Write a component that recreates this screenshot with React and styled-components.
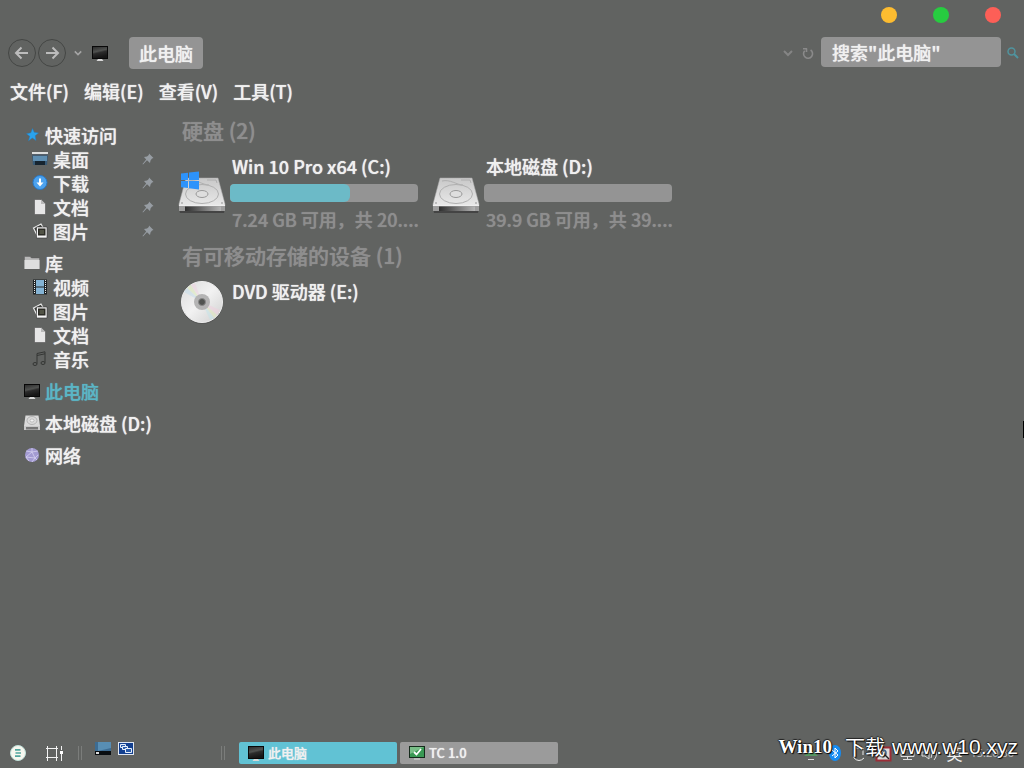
import React from "react";
import styled, { createGlobalStyle } from "styled-components";

const cjk = '"Noto Sans CJK SC", "Noto Sans", sans-serif';

const GlobalStyle = createGlobalStyle`
  * { box-sizing: border-box; }
  body {
    margin: 0;
    background: #616361;
    color: #f0f0f0;
    font: 500 18px/24px ${cjk};
    text-shadow: 0 0 1px currentColor;
  }
  button, input { font: inherit; color: inherit; text-shadow: inherit; }
  button { border: 0; padding: 0; background: none; cursor: pointer; }
  h2, p, ul { margin: 0; padding: 0; }
  svg { display: block; flex: none; }
`;

const Window = styled.div`
  position: relative;
  display: flex;
  flex-direction: column;
  min-height: 100vh;
  overflow: hidden;
`;

const TitleBar = styled.header`
  display: flex;
  justify-content: flex-end;
  gap: 36px;
  padding: 7px 23px 0 0;
  height: 37px;
`;

const WindowButton = styled.button`
  width: 16px;
  height: 16px;
  border-radius: 50%;
  background: ${(p) => p.$color};
`;

const NavBar = styled.nav`
  display: flex;
  align-items: center;
  height: 32px;
  padding: 0 1px 0 8px;
`;

const RoundButton = styled.button`
  display: grid;
  place-items: center;
  width: 28px;
  height: 28px;
  margin-right: 2px;
  border: 1px solid #444644;
  border-radius: 50%;
`;

const NavIcon = styled.div`
  margin: 0 21px 0 4px;
`;

const PlainButton = styled.button`
  display: grid;
  place-items: center;
  width: 20px;
  height: 20px;
`;

const Address = styled.button`
  height: 32px;
  padding: 0 10px;
  border-radius: 4px;
  background: #949494;
`;

const Spacer = styled.div`
  flex: 1;
`;

const SearchInput = styled.input`
  width: 180px;
  height: 30px;
  margin: 0 2px 2px 3px;
  padding: 0 11px;
  border: 0;
  border-radius: 4px;
  background: #949494;
  &::placeholder { color: #f0f0f0; opacity: 1; }
`;

const MenuBar = styled.nav`
  display: flex;
  gap: 15px;
  height: 46px;
  padding: 10px 10px 0;
`;

const MenuButton = styled.button`
  height: 24px;
`;

const Body = styled.div`
  display: flex;
  flex: 1;
`;

const Sidebar = styled.aside`
  width: 178px;
  flex: none;
  display: flex;
  flex-direction: column;
  gap: 8px;
  padding-top: 8px;
`;

const TreeGroup = styled.ul`
  list-style: none;
`;

const TreeLink = styled.a`
  display: flex;
  align-items: center;
  height: 24px;
  padding: 0 24px 0 ${(p) => (p.$nested ? 32 : 24)}px;
  gap: 5px;
  color: ${(p) => (p.$active ? "#5bb5c5" : "inherit")};
  text-shadow: 0 0 1px currentColor;
  text-decoration: none;
  white-space: nowrap;
`;

const Pin = styled.span`
  margin-left: auto;
`;

const Content = styled.main`
  flex: 1;
  min-width: 0;
`;

const GroupTitle = styled.h2`
  padding-left: 4px;
  font-size: 21px;
  font-weight: 500;
  line-height: 30px;
  color: #8e8e8e;
  text-shadow: 0 0 1px currentColor;
`;

const DriveGrid = styled.div`
  display: flex;
  flex-wrap: wrap;
  column-gap: 14px;
  padding: 9px 0;
`;

const Drive = styled.article`
  display: flex;
  align-items: ${(p) => (p.$top ? "flex-start" : "center")};
  gap: 4px;
  width: 240px;
`;

const DriveInfo = styled.div`
  width: 188px;
`;

const DriveName = styled.p`
  padding-left: 2px;
  white-space: nowrap;
`;

const Meter = styled.div`
  height: 18px;
  margin: 6px 0 5px;
  border-radius: 4px;
  background: #949494;
  overflow: hidden;
`;

const MeterFill = styled.div`
  height: 100%;
  border-radius: 4px 6px 6px 4px;
  background: #6cbac7;
`;

const DriveSpace = styled.p`
  padding-left: 2px;
  color: #8e8e8e;
  text-shadow: 0 0 1px currentColor;
  white-space: nowrap;
`;

const Taskbar = styled.footer`
  display: flex;
  align-items: center;
  height: 30px;
  padding: 0 10px;
`;

const StartArea = styled.div`
  display: flex;
  align-items: center;
  gap: 20px;
  width: 68px;
`;

const QuickLaunch = styled.div`
  display: flex;
  align-items: flex-start;
  gap: 7px;
  width: 139px;
  height: 22px;
  padding-left: 13px;
`;

const Divider = styled.span`
  flex: none;
  width: 4px;
  height: 14px;
  border: solid #7b7d7b;
  border-width: 0 1px;
`;

const Task = styled.button`
  display: flex;
  align-items: center;
  gap: 4px;
  width: 158px;
  height: 22px;
  margin-right: 3px;
  padding: 0 9px;
  border-radius: 2px;
  background: ${(p) => (p.$active ? "#61c2d4" : "#9b9b9b")};
  font: 500 13px/22px ${cjk};
`;

const TaskGroup = styled.div`
  display: flex;
  margin-left: 14px;
`;

const Tray = styled.div`
  display: flex;
  align-items: center;
  gap: 8px;
  margin-left: auto;
  font: 16px/20px ${cjk};
  text-shadow: none;
`;

const Clock = styled.time`
  font: 11px/16px "Open Sans", sans-serif;
  color: #c4c4c4;
`;

const Watermark = styled.div`
  position: absolute;
  right: 6px;
  bottom: 8px;
  display: flex;
  align-items: center;
  height: 26px;
  color: #fff;
  font: 21px/26px "Liberation Sans", sans-serif;
  text-shadow: 1px 1px 1px #000, -1px 0 1px #222, 0 -1px 1px #222;
  white-space: nowrap;
`;

const WatermarkSerif = styled.span`
  margin-right: 13px;
  font: bold 19px/26px "Liberation Serif", serif;
`;

const WatermarkCjk = styled.span`
  margin-right: 7px;
  font: 20px/26px ${cjk};
`;

const EdgePointer = styled.span`
  position: absolute;
  right: 0;
  top: 421px;
  width: 1px;
  height: 17px;
  background: #000;
`;

const ArrowIcon = ({ flip }) => (
  <svg width="16" height="16" viewBox="0 0 16 16" fill="none" stroke="#bcbcbc" strokeWidth="2">
    <path d={flip ? "M2 8H14M8.500 2.500L14 8L8.500 13.500" : "M14 8H2M7.500 2.500L2 8L7.500 13.500"} />
  </svg>
);

const Chevron = ({ size, color }) => (
  <svg width={size} height={size} viewBox="0 0 10 10" fill="none" stroke={color} strokeWidth="2">
    <path d="M1 3L5 7L9 3" />
  </svg>
);

const RefreshIcon = () => (
  <svg width="12" height="14" viewBox="0 0 12 14" fill="none" stroke="#8a8a8a" strokeWidth="1.600">
    <path d="M2.700 4.700A4.500 4.500 0 1 0 8.600 4M4.500 2.500V6M1 2.800H5" />
  </svg>
);

const SearchIcon = () => (
  <svg width="12" height="12" viewBox="0 0 12 12" fill="none" stroke="#50949f">
    <circle cx="4.500" cy="4.500" r="3.500" strokeWidth="1.500" />
    <path d="M7 7L11 11" strokeWidth="2" />
  </svg>
);

const MonitorIcon = () => (
  <svg width="16" height="17" viewBox="0 0 16 17">
    <defs>
      <linearGradient id="screen" x1="0" y1="0" x2="0.300" y2="1">
        <stop offset="0" stopColor="#2c2c2c" />
        <stop offset=".45" stopColor="#505250" />
        <stop offset=".6" stopColor="#2c2c2c" />
        <stop offset="1" stopColor="#161616" />
      </linearGradient>
    </defs>
    <path d="M0 1H16V14H0Z" fill="#080808" />
    <path d="M1 2H15V13H1Z" fill="url(#screen)" />
    <path d="M6 14H10L11.500 16H4.500Z" fill="#d9d9d9" />
  </svg>
);

const StarIcon = () => (
  <svg width="16" height="16" viewBox="0 0 16 16">
    <path d="M8.500 1.500L10.200 5.200L14.500 6L11.200 8.800L12 13.500L8.400 11L4.500 13.800L5.800 9.300L2.500 6.800L6.800 5.800Z" fill="#29a3ed" stroke="#287bb8" strokeWidth=".5" />
  </svg>
);

const DesktopIcon = () => (
  <svg width="16" height="16" viewBox="0 0 16 16">
    <path d="M0 4H16L15 14H1Z" fill="#385a76" />
    <path d="M1 5H15V10H1Z" fill="#5f8fb2" />
    <path d="M0 1H16V3H0Z" fill="#dcdede" />
    <path d="M0 3H16V4.500H0Z" fill="#55606a" />
    <path d="M3 10H13V14H3Z" fill="#16242f" />
  </svg>
);

const DownloadIcon = () => (
  <svg width="16" height="16" viewBox="0 0 16 16">
    <circle cx="8" cy="7.500" r="7" fill="#4ca2ee" stroke="#2779ca" />
    <path d="M7 3.500H9V7.500H11.500L8 11.500L4.500 7.500H7Z" fill="#fff" />
  </svg>
);

const DocumentIcon = () => (
  <svg width="16" height="16" viewBox="0 0 16 16">
    <path d="M2.500 0.500H9L13.500 5V15.500H2.500Z" fill="#e6e6e6" stroke="#444" strokeWidth=".5" />
    <path d="M9 0.500V5H13.500Z" fill="#b9b9b9" />
  </svg>
);

const PicturesIcon = () => (
  <svg width="16" height="16" viewBox="0 0 16 16">
    <path d="M5 12L1.500 5L9 1L11 4.500" fill="#3c3e3a" stroke="#e8e8e8" strokeWidth="1.200" />
    <path d="M4.500 4H15V15H4.500Z" fill="#f5f5f5" stroke="#333" strokeWidth=".6" />
    <path d="M6 5.500H13.500V12.500H6Z" fill="#2c2c26" />
    <path d="M7.500 7H12V11H7.500Z" fill="#515345" />
  </svg>
);

const FolderIcon = () => (
  <svg width="16" height="16" viewBox="0 0 16 16">
    <path d="M0.500 1.500H6L7.500 3H15.500V14H0.500Z" fill="#b9b9b9" stroke="#555" strokeWidth=".4" />
    <path d="M0.500 5H15.500V14H0.500Z" fill="#dedede" />
  </svg>
);

const FilmIcon = () => (
  <svg width="16" height="16" viewBox="0 0 16 16">
    <path d="M1 0.500H15V15.500H1Z" fill="#202426" />
    <path d="M4 1H12V7.500H4ZM4 8.500H12V15H4Z" fill="#84b3d4" />
    <path d="M2.500 1V15M13.500 1V15" stroke="#e8e8e8" strokeDasharray="1 1" />
  </svg>
);

const MusicIcon = () => (
  <svg width="16" height="16" viewBox="0 0 16 16" fill="none" stroke="#343634">
    <path d="M5 12.500V2.500L13 0.800V11.500M5 4.500L13 2.800" />
    <ellipse cx="3" cy="13" rx="2" ry="1.500" />
    <ellipse cx="11" cy="12" rx="2" ry="1.500" />
  </svg>
);

const NetworkIcon = () => (
  <svg width="16" height="16" viewBox="0 0 16 16">
    <circle cx="8" cy="8" r="7" fill="#a39bd2" />
    <path d="M2 4L8 5L14 4M2 10L8 5L11 11L14 8M2 10L11 11L8 15M2 10L5 14M8 1L8 5M11 11L13 13" fill="none" stroke="#d5d0f0" strokeWidth=".8" />
  </svg>
);

const SmallDriveIcon = () => (
  <svg width="16" height="16" viewBox="0 0 16 16">
    <path d="M1.500 0.500H14.500L16 11H0Z" fill="#dadada" />
    <ellipse cx="8" cy="5.500" rx="5" ry="4" fill="none" stroke="#aaa" strokeWidth=".8" />
    <ellipse cx="8" cy="5.500" rx="2" ry="1.500" fill="#f2f2f2" stroke="#999" strokeWidth=".5" />
    <path d="M0 11H16V15H0Z" fill="#c9c9c9" />
    <path d="M2 12H14V14.500H2Z" fill="#777" />
  </svg>
);

const PinIcon = () => (
  <svg width="12" height="12" viewBox="0 0 12 12">
    <path d="M7 0.500L11.500 5L10 5.500L8.500 7.500L8 10L5 7.300L1 11.500L0.500 11L4.200 6.500L2 4L5 3.500L6.800 2Z" fill="#979da3" />
  </svg>
);

const DriveIcon = ({ system }) => (
  <svg width="48" height="48" viewBox="0 0 48 48">
    <defs>
      <linearGradient id="lid" x1="0" y1="0" x2="0" y2="1">
        <stop offset="0" stopColor="#c8c8c8" />
        <stop offset="1" stopColor="#e9e9e9" />
      </linearGradient>
      <linearGradient id="edge">
        <stop offset="0" stopColor="#2e2e2e" />
        <stop offset="1" stopColor="#b4b4b4" />
      </linearGradient>
    </defs>
    <path d="M1 38L2 44H46L47 38Z" fill="#444" />
    <path d="M8 9H40L47 35V37H1V35Z" fill="url(#lid)" stroke="#aaa" strokeWidth=".5" />
    <path d="M1 36H47V42H1Z" fill="#9d9d9d" />
    <path d="M1 36.500H47" stroke="#eee" />
    <path d="M7 37.500H43V42H7Z" fill="url(#edge)" />
    <ellipse cx="24" cy="25" rx="16.500" ry="9.500" fill="none" stroke="#b0b0b0" />
    <path d="M10 12C18 10 25 16 31 16M29 11H38L39 14" fill="none" stroke="#b0b0b0" />
    <ellipse cx="24" cy="25" rx="6" ry="3.500" fill="#dedede" stroke="#999" />
    <circle cx="4" cy="34" r=".8" fill="#888" />
    <circle cx="44" cy="34" r=".8" fill="#888" />
    {system && (
      <path d="M3 4.500L10 3.800V11H3ZM11 3.600L21 2.500V11H11ZM3 12H10V19L3 18.200ZM11 12H21V20.500L11 19.200Z" fill="#2d93fb" />
    )}
  </svg>
);

const DiscIcon = () => (
  <svg width="48" height="48" viewBox="0 0 48 48">
    <defs>
      <linearGradient id="disc" x1="0" y1="0" x2="1" y2="1">
        <stop offset="0" stopColor="#dadada" />
        <stop offset=".48" stopColor="#f2f2f2" />
        <stop offset="1" stopColor="#cecece" />
      </linearGradient>
    </defs>
    <circle cx="24" cy="24" r="21" fill="#4b4b4b" opacity=".5" />
    <circle cx="24" cy="23" r="20.500" fill="url(#disc)" stroke="#eee" />
    <g opacity=".55">
      <path d="M24 23L9 9L13 6Z" fill="#ddecbb" />
      <path d="M24 23L6 13L9 9Z" fill="#c5ddea" />
      <path d="M24 23L13 6L17 4Z" fill="#efd4e1" />
      <path d="M24 23L42 31L39 36Z" fill="#efd1de" />
      <path d="M24 23L39 36L36 39Z" fill="#dfe8bd" />
      <path d="M24 23L36 39L32 41Z" fill="#c5e4e8" />
    </g>
    <circle cx="24" cy="23" r="8" fill="#b4b4b4" />
    <circle cx="24" cy="23" r="3.500" fill="#505350" stroke="#888" />
  </svg>
);

const StartIcon = () => (
  <svg width="16" height="16" viewBox="0 0 16 16">
    <circle cx="8" cy="8" r="7.500" fill="#f7f7ef" stroke="#bfe0d9" />
    <path d="M5 4.800H10.500M5.500 8H11M5 11.200H10.500" stroke="#52a69f" strokeWidth="1.700" />
  </svg>
);

const TaskViewIcon = () => (
  <svg width="17" height="16" viewBox="0 0 17 16" fill="none" stroke="#f3f3f3">
    <path d="M0 3.500H12M0 12.500H12M1.500 1V3.500M10.500 1V3.500M1.500 3.500V12.500M10.500 3.500V12.500M1.500 12.500V16M10.500 12.500V16M15.500 1V5M15.500 9V16" />
    <path d="M14 6H17V9H14Z" fill="#fff" stroke="none" />
  </svg>
);

const ShowDesktopIcon = () => (
  <svg width="16" height="14" viewBox="0 0 16 14">
    <path d="M0 0H16V10H0Z" fill="#3d6c92" />
    <path d="M3 0H16V6L3 9Z" fill="#6aa5cc" opacity=".6" />
    <path d="M0 9H16V13H0Z" fill="#090d10" />
    <path d="M1 10H4V12H1Z" fill="#ddd" />
  </svg>
);

const WindowsIcon = () => (
  <svg width="16" height="14" viewBox="0 0 16 14">
    <path d="M0 0H16V13H0Z" fill="#dfe6f2" />
    <path d="M1 1H15V12H1Z" fill="#123f8f" />
    <g fill="#2b5cab" stroke="#e8f0fb">
      <path d="M2.500 2.500H7.500V5.500H2.500Z" />
      <path d="M4.500 4.500H9.500V7.500H4.500Z" />
      <path d="M7.500 6.500H13.500V10.500H7.500Z" />
    </g>
  </svg>
);

const CheckMonitorIcon = () => (
  <svg width="16" height="16" viewBox="0 0 16 16">
    <path d="M0 1H16V13H0Z" fill="#152b1c" />
    <path d="M1 2H15V12H1Z" fill="#399954" />
    <path d="M1 2H15L1 9Z" fill="#79bf88" />
    <path d="M5 7L7.500 9.500L12 4" fill="none" stroke="#fff" strokeWidth="1.800" />
    <path d="M5 14H11" stroke="#ddd" />
  </svg>
);

const TrayIcons = () => (
  <svg width="140" height="18" viewBox="0 0 140 18" fill="none">
    <path d="M6 12L13 5L20 12Z" fill="#579863" />
    <path d="M10 15.500H16" stroke="#ddd" />
    <ellipse cx="37" cy="9" rx="6" ry="8" fill="#168cf2" />
    <path d="M34 6L40 11L37 14V4L40 7L34 12" stroke="#fff" />
    <path d="M56 6V14Q61 19 66 14M58 4H65V11" stroke="#eee" />
    <path d="M78.500 3.500H92.500V16.500H78.500Z" fill="#ddd" stroke="#9b2d37" strokeWidth="2" />
    <circle cx="85" cy="9" r="3" stroke="#3c638c" strokeWidth="1.500" />
    <path d="M87 11L91 15" stroke="#222" strokeWidth="1.500" />
    <path d="M103 5.500H116V12.500H103ZM109.500 13V16M105 15.500H114" stroke="#ddd" />
    <path d="M124 8H127L131 4V15L127 12H124ZM133 6Q135 10 133 14M136 4Q141 10 136 16" stroke="#ddd" />
  </svg>
);

const groups = [
  [
    { label: "快速访问", icon: <StarIcon /> },
    { label: "桌面", icon: <DesktopIcon />, nested: true, pinned: true },
    { label: "下载", icon: <DownloadIcon />, nested: true, pinned: true },
    { label: "文档", icon: <DocumentIcon />, nested: true, pinned: true },
    { label: "图片", icon: <PicturesIcon />, nested: true, pinned: true },
  ],
  [
    { label: "库", icon: <FolderIcon /> },
    { label: "视频", icon: <FilmIcon />, nested: true },
    { label: "图片", icon: <PicturesIcon />, nested: true },
    { label: "文档", icon: <DocumentIcon />, nested: true },
    { label: "音乐", icon: <MusicIcon />, nested: true },
  ],
  [{ label: "此电脑", icon: <MonitorIcon />, active: true }],
  [{ label: "本地磁盘 (D:)", icon: <SmallDriveIcon /> }],
  [{ label: "网络", icon: <NetworkIcon /> }],
];

const drives = [
  { name: "Win 10 Pro x64 (C:)", space: "7.24 GB 可用，共 20....", used: 64, system: true },
  { name: "本地磁盘 (D:)", space: "39.9 GB 可用，共 39....", used: 0 },
];

export default function App() {
  return (
    <Window>
      <GlobalStyle />
      <TitleBar>
        <WindowButton $color="#fdbc30" aria-label="最小化" />
        <WindowButton $color="#27cc40" aria-label="最大化" />
        <WindowButton $color="#fd5f57" aria-label="关闭" />
      </TitleBar>
      <NavBar>
        <RoundButton aria-label="后退"><ArrowIcon /></RoundButton>
        <RoundButton aria-label="前进"><ArrowIcon flip /></RoundButton>
        <PlainButton aria-label="最近位置"><Chevron size={8} color="#a5a5a5" /></PlainButton>
        <NavIcon><MonitorIcon /></NavIcon>
        <Address>此电脑</Address>
        <Spacer />
        <PlainButton aria-label="历史记录"><Chevron size={10} color="#858585" /></PlainButton>
        <PlainButton aria-label="刷新"><RefreshIcon /></PlainButton>
        <SearchInput type="text" aria-label="搜索" placeholder={'搜索"此电脑"'} />
        <PlainButton aria-label="开始搜索"><SearchIcon /></PlainButton>
      </NavBar>
      <MenuBar>
        {["文件(F)", "编辑(E)", "查看(V)", "工具(T)"].map((m) => (
          <MenuButton key={m}>{m}</MenuButton>
        ))}
      </MenuBar>
      <Body>
        <Sidebar>
          {groups.map((items) => (
            <TreeGroup key={items[0].label}>
              {items.map((item) => (
                <li key={item.label}>
                  <TreeLink href="#" $nested={item.nested} $active={item.active}>
                    {item.icon}
                    {item.label}
                    {item.pinned && <Pin><PinIcon /></Pin>}
                  </TreeLink>
                </li>
              ))}
            </TreeGroup>
          ))}
        </Sidebar>
        <Content>
          <GroupTitle>硬盘 (2)</GroupTitle>
          <DriveGrid>
            {drives.map((d) => (
              <Drive key={d.name}>
                <DriveIcon system={d.system} />
                <DriveInfo>
                  <DriveName>{d.name}</DriveName>
                  <Meter role="meter" aria-label={d.name} aria-valuemin={0} aria-valuemax={100} aria-valuenow={d.used}>
                    <MeterFill style={{ width: `${d.used}%` }} />
                  </Meter>
                  <DriveSpace>{d.space}</DriveSpace>
                </DriveInfo>
              </Drive>
            ))}
          </DriveGrid>
          <GroupTitle>有可移动存储的设备 (1)</GroupTitle>
          <DriveGrid>
            <Drive $top>
              <DiscIcon />
              <DriveName>DVD 驱动器 (E:)</DriveName>
            </Drive>
          </DriveGrid>
        </Content>
      </Body>
      <Taskbar>
        <StartArea>
          <button aria-label="开始"><StartIcon /></button>
          <button aria-label="任务视图"><TaskViewIcon /></button>
        </StartArea>
        <Divider />
        <QuickLaunch>
          <button aria-label="显示桌面"><ShowDesktopIcon /></button>
          <button aria-label="切换窗口"><WindowsIcon /></button>
        </QuickLaunch>
        <Divider />
        <TaskGroup>
          <Task $active><MonitorIcon />此电脑</Task>
          <Task><CheckMonitorIcon />TC 1.0</Task>
        </TaskGroup>
        <Tray>
          <TrayIcons />
          英
          <Clock>15:20:30</Clock>
        </Tray>
      </Taskbar>
      <EdgePointer />
      <Watermark>
        <WatermarkSerif>Win10</WatermarkSerif>
        <WatermarkCjk>下载</WatermarkCjk>
        www.w10.xyz
      </Watermark>
    </Window>
  );
}
